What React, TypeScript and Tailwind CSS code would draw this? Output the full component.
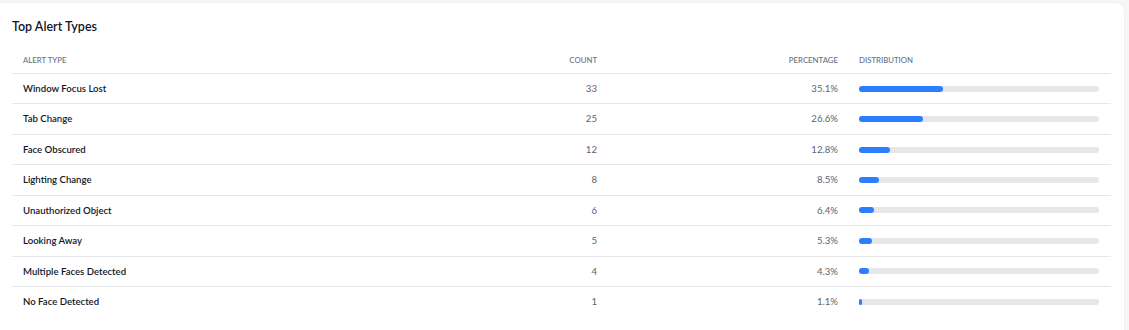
const rows = [
  { type: 'Window Focus Lost', count: 33, pct: 35.1 },
  { type: 'Tab Change', count: 25, pct: 26.6 },
  { type: 'Face Obscured', count: 12, pct: 12.8 },
  { type: 'Lighting Change', count: 8, pct: 8.5 },
  { type: 'Unauthorized Object', count: 6, pct: 6.4 },
  { type: 'Looking Away', count: 5, pct: 5.3 },
  { type: 'Multiple Faces Detected', count: 4, pct: 4.3 },
  { type: 'No Face Detected', count: 1, pct: 1.1 },
];

export default function App() {
  return (
    <div
      className="w-full min-h-screen bg-[#f7f7f8] pt-[2px] pr-[4px]"
      style={{ fontFamily: 'Lato, "Noto Sans", sans-serif' }}
    >
      <div className="bg-white rounded-tr-lg border-t border-r border-[#eeeff1] pt-[14px] px-3 pb-4">
        {/* Title */}
        <h2 className="text-[12.5px] leading-5 font-semibold text-gray-900">Top Alert Types</h2>

        {/* Table */}
        <div className="mt-[10px] mr-[1px]">
          <div className="grid grid-cols-[348px_249px_241px_1fr] h-[27px] pt-[2px] items-center border-b border-gray-200 text-[7.8px] font-medium uppercase text-gray-500">
            <div className="px-[11px]">Alert Type</div>
            <div className="px-3 text-right">Count</div>
            <div className="px-3 text-right">Percentage</div>
            <div className="px-[9px]">Distribution</div>
          </div>
          {rows.map((row, i) => (
            <div
              key={row.type}
              className={`grid grid-cols-[348px_249px_241px_1fr] h-[30.43px] items-center text-[9.6px] ${
                i < rows.length - 1 ? 'border-b border-gray-200' : ''
              }`}
            >
              <div className="px-[11px] pt-px font-semibold text-gray-900">{row.type}</div>
              <div className="px-3 pt-px text-right text-[#5b6472]">{row.count}</div>
              <div className="px-3 pt-px text-right text-[#5b6472]">{row.pct}%</div>
              <div className="px-[9px]">
                <div className="w-60 h-1.5 rounded-full bg-gray-200">
                  <div className="h-1.5 rounded-full bg-blue-500" style={{ width: `${row.pct}%` }} />
                </div>
              </div>
            </div>
          ))}
        </div>
      </div>
    </div>
  );
}
